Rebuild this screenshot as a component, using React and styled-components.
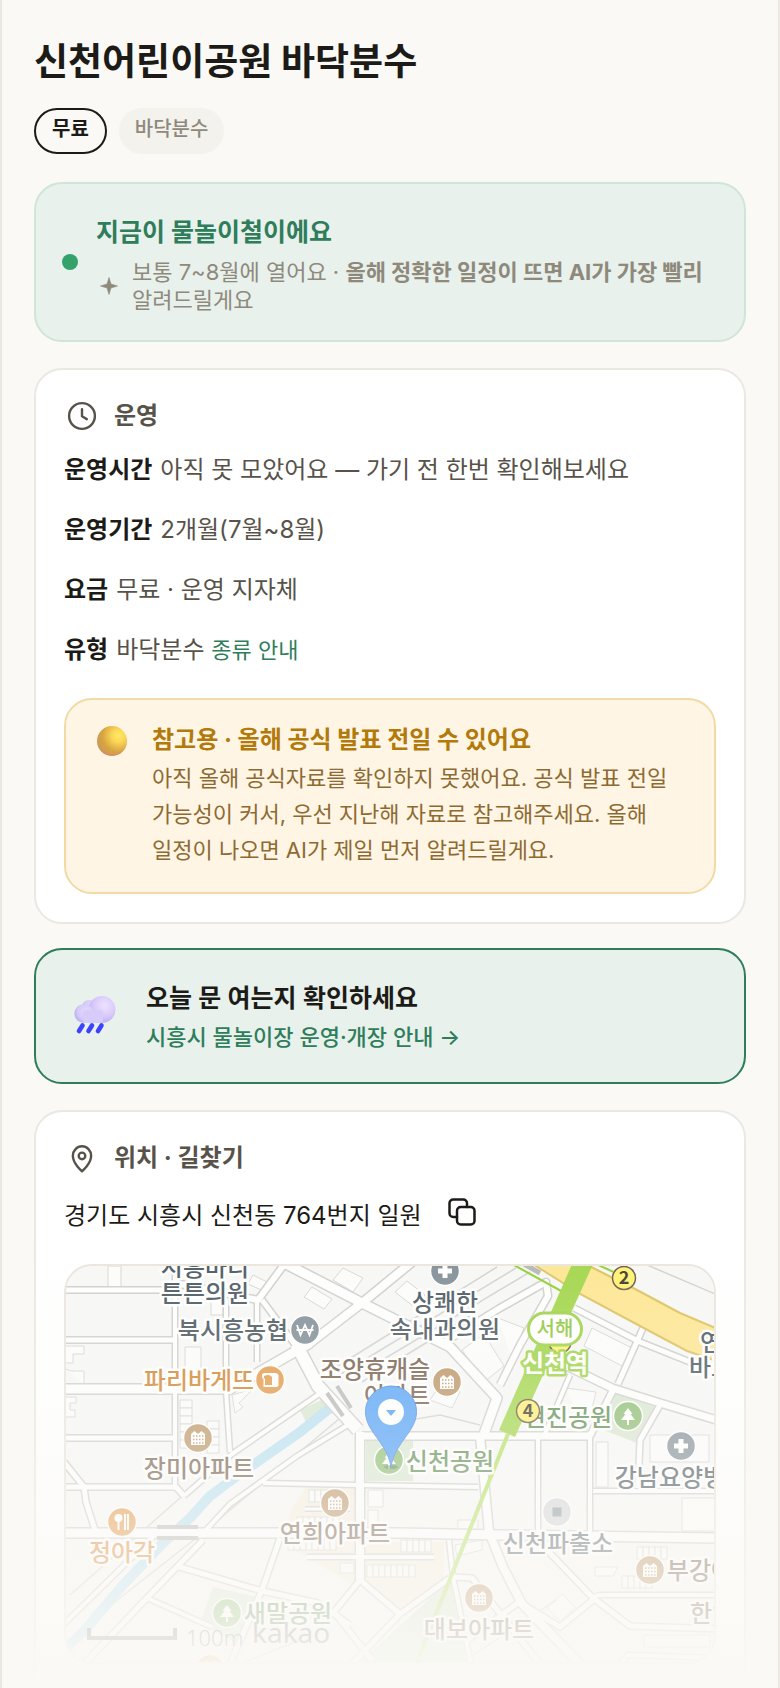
import React from 'react';
import styled, { createGlobalStyle } from 'styled-components';

const GlobalStyle = createGlobalStyle`
  * {
    box-sizing: border-box;
  }

  body {
    margin: 0;
    background: #faf9f5;
    color: #1c1b17;
    font-family: Inter, 'Noto Sans CJK KR', sans-serif;
    font-size: 24px;
    line-height: 40px;
    word-break: keep-all;
  }
`;

const Page = styled.main`
  position: relative;
  max-height: 100vh;
  overflow: hidden;
  padding: 38px 32px 0;
  border: solid #e9e7e0;
  border-width: 0 2px;
  background: #faf9f5;
`;

const Title = styled.h1`
  margin: 0 0 22px;
  font-size: 37px;
  line-height: 48px;
  font-weight: 700;
`;

const Chips = styled.div`
  display: flex;
  gap: 12px;
  margin-bottom: 28px;
`;

const Chip = styled.span`
  padding: ${props => (props.$active ? '6px 16px 10px' : '8px 16px 12px')};
  border: ${props => (props.$active ? '2px solid #1c1b17' : 'none')};
  border-radius: 23px;
  background: ${props => (props.$active ? 'transparent' : '#f3f2ed')};
  color: ${props => (props.$active ? '#1c1b17' : '#8f897c')};
  font-size: 20px;
  line-height: 26px;
  font-weight: ${props => (props.$active ? 700 : 500)};
`;

const Banner = styled.section`
  display: flex;
  align-items: center;
  gap: 18px;
  margin-bottom: 26px;
  padding: 26px;
  border: 2px solid #cfe5d9;
  border-radius: 28px;
  background: #e8f1ec;
`;

const Dot = styled.span`
  flex: none;
  width: 16px;
  height: 16px;
  border-radius: 50%;
  background: #36a26b;
`;

const BannerTitle = styled.h2`
  margin: 0 0 4px;
  color: #2f7d5b;
  font-size: 25px;
  line-height: 44px;
  font-weight: 700;
`;

const BannerNote = styled.div`
  display: flex;
  align-items: center;
  gap: 10px;
  color: #8f897c;
  font-size: 22px;
  line-height: 28px;

  svg {
    flex: none;
  }

  p {
    margin: 0;
  }
`;

const Card = styled.section`
  margin-bottom: ${props => (props.$last ? '0' : '24px')};
  padding: 28px 28px ${props => (props.$last ? '60px' : '28px')};
  border: 2px solid #eae8e2;
  border-radius: 28px;
  background: #ffffff;
`;

const CardHeader = styled.h2`
  display: flex;
  align-items: center;
  gap: 14px;
  margin: 0 0 16px;
  color: #57534a;
  font-size: 24px;
  line-height: 36px;
  font-weight: 700;
`;

const Facts = styled.dl`
  display: flex;
  flex-direction: column;
  gap: 20px;
  margin: 0;
`;

const Fact = styled.div`
  display: flex;
  align-items: baseline;
  gap: 8px;

  dt {
    font-weight: 700;
  }

  dd {
    margin: 0;
    color: #57534a;
  }
`;

const TypeLink = styled.a`
  color: #2f7d5b;
  font-size: 22px;
  text-decoration: none;
`;

const Notice = styled.div`
  display: flex;
  align-items: flex-start;
  gap: 24px;
  margin-top: 28px;
  padding: 24px 30px;
  border: 2px solid #f0dba6;
  border-radius: 28px;
  background: #fff5e4;

  svg {
    flex: none;
  }
`;

const NoticeTitle = styled.h3`
  margin: 0 0 4px;
  color: #b27a0a;
  font-size: 24px;
  line-height: 32px;
  font-weight: 700;
`;

const NoticeText = styled.p`
  margin: 0;
  color: #8d6a32;
  font-size: 22px;
  line-height: 36px;
`;

const CheckLink = styled.a`
  display: flex;
  align-items: center;
  gap: 24px;
  margin-bottom: 26px;
  padding: 26px 30px;
  border: 2px solid #2f7d5b;
  border-radius: 28px;
  background: #e8f1ec;
  text-decoration: none;

  svg {
    flex: none;
  }
`;

const CheckTitle = styled.span`
  display: block;
  padding-top: 2px;
  color: #1c1b17;
  font-size: 25px;
  line-height: 40px;
  font-weight: 600;
`;

const CheckSub = styled.span`
  display: block;
  color: #2f7d5b;
  font-size: 22px;
  line-height: 38px;
  font-weight: 500;
`;

const Address = styled.div`
  display: flex;
  align-items: flex-start;
  gap: 20px;
  margin-bottom: 24px;
  line-height: 48px;
`;

const CopyButton = styled.button`
  display: flex;
  align-items: center;
  justify-content: center;
  width: 40px;
  height: 40px;
  padding: 0;
  border: none;
  background: none;
  color: #1c1b17;
  cursor: pointer;
`;

const MapFrame = styled.div`
  height: 400px;
  overflow: hidden;
  border: 2px solid #eae6dc;
  border-radius: 28px;
  background: #f7f7f6;

  svg {
    display: block;
    width: 100%;
    height: 100%;
  }
`;

const MapText = styled.text`
  fill: ${props => props.$color};
  stroke: #ffffff;
  stroke-width: 5px;
  stroke-linejoin: round;
  paint-order: stroke;
  font-family: 'Noto Sans CJK KR', sans-serif;
  font-size: 24px;
  font-weight: 500;
`;

const StationText = styled(MapText)`
  fill: #ffffff;
  stroke: #9fd34a;
  font-weight: 700;
`;

const LineText = styled(MapText)`
  stroke: none;
  font-size: 20px;
`;

const ExitText = styled(LineText)`
  font-size: 18px;
  font-weight: 700;
`;

const ScaleText = styled.text`
  fill: #7a7a78;
  font-family: 'Noto Sans', sans-serif;
  font-size: 22px;
  font-weight: 300;
`;

const KakaoText = styled(ScaleText)`
  font-size: 28px;
  font-weight: 400;
`;

const Fade = styled.div`
  position: absolute;
  left: -2px;
  right: -2px;
  bottom: 0;
  height: 458px;
  pointer-events: none;
  background: linear-gradient(
    to bottom,
    rgba(250, 249, 245, 0) 0%,
    rgba(250, 249, 245, 0.16) 25%,
    rgba(250, 249, 245, 0.42) 54%,
    rgba(250, 249, 245, 0.6) 68%,
    rgba(250, 249, 245, 0.82) 87%,
    rgba(250, 249, 245, 0.94) 95%,
    #faf9f5 100%
  );
`;

const SparkIcon = () => (
  <svg width="26" height="26" viewBox="0 0 26 26" aria-hidden="true">
    <path d="M13 4.500l2 6.500 6.500 2-6.500 2-2 6.500-2-6.500-6.500-2 6.500-2z" fill="#8f897c" stroke="#8f897c" strokeWidth="0.6" />
  </svg>
);

const ClockIcon = () => (
  <svg width="36" height="36" viewBox="0 0 24 24" fill="none" stroke="currentColor" strokeWidth="1.6" strokeLinecap="round" strokeLinejoin="round" aria-hidden="true">
    <circle cx="12" cy="12" r="8.6" />
    <path d="M12 7.400v4.800l3.200 1.900" />
  </svg>
);

const PinIcon = () => (
  <svg width="36" height="36" viewBox="0 0 24 24" fill="none" stroke="currentColor" strokeWidth="1.6" strokeLinecap="round" strokeLinejoin="round" aria-hidden="true">
    <path d="M12 20.800s-6.100-5-6.100-10.300a6.100 6.300 0 0 1 12.200 0c0 5.300-6.100 10.300-6.100 10.300z" />
    <circle cx="12" cy="10.600" r="2.200" />
  </svg>
);

const CopyIcon = () => (
  <svg width="30" height="30" viewBox="0 0 24 24" fill="none" stroke="currentColor" strokeWidth="2" strokeLinecap="round" strokeLinejoin="round" aria-hidden="true">
    <rect x="8" y="8" width="14" height="14" rx="3" />
    <path d="M8 16H5a3 3 0 0 1-3-3V5a3 3 0 0 1 3-3h8a3 3 0 0 1 3 3v3" />
  </svg>
);

const BallIcon = () => (
  <svg width="32" height="32" viewBox="0 0 32 32" aria-hidden="true">
    <defs>
      <radialGradient id="ball" cx="0.72" cy="0.32" r="0.72">
        <stop offset="0" stopColor="#ffea62" />
        <stop offset="0.3" stopColor="#fbd757" />
        <stop offset="0.75" stopColor="#d7a441" />
        <stop offset="1" stopColor="#cf9a55" />
      </radialGradient>
      <radialGradient id="ballEdge" cx="0.5" cy="0.42" r="0.6">
        <stop offset="0.85" stopColor="#d0707a" stopOpacity="0" />
        <stop offset="1" stopColor="#d0707a" stopOpacity="0.8" />
      </radialGradient>
    </defs>
    <circle cx="16" cy="17" r="15" fill="url(#ball)" />
    <circle cx="16" cy="17" r="15" fill="url(#ballEdge)" />
  </svg>
);

const RainIcon = () => (
  <svg width="56" height="56" viewBox="0 0 56 56" aria-hidden="true">
    <defs>
      <radialGradient id="puffBig" cx="0.6" cy="0.35" r="0.65">
        <stop offset="0" stopColor="#ece2ff" />
        <stop offset="0.6" stopColor="#d9cbfa" />
        <stop offset="1" stopColor="#bfb0f3" />
      </radialGradient>
      <radialGradient id="puffSmall" cx="0.6" cy="0.4" r="0.6">
        <stop offset="0" stopColor="#e4dafc" />
        <stop offset="0.7" stopColor="#d5caf9" />
        <stop offset="1" stopColor="#bdb2f4" />
      </radialGradient>
    </defs>
    <circle cx="23" cy="19" r="7" fill="url(#puffSmall)" />
    <circle cx="36" cy="21.500" r="13.500" fill="url(#puffBig)" />
    <circle cx="18" cy="25.500" r="9.600" fill="url(#puffSmall)" />
    <rect x="17" y="22" width="20" height="13" rx="3" fill="#d7cbfa" />
    <path d="M16.500 37.500l-3.500 5.500M26 37.500l-3.500 5.500M35.500 37.500l-3.500 5.500" stroke="#3c42ff" strokeWidth="4.600" strokeLinecap="round" />
  </svg>
);

// width is the white carriageway, the grey kerb is drawn outside it
const roads = [
  { w: 5, d: 'M60 1290H174' },
  { w: 5, d: 'M60 1340L175 1340' },
  { w: 9, d: 'M60 1389H230L310 1343' },
  { w: 5, d: 'M60 1438H175' },
  { w: 5, d: 'M60 1487H176L184 1496' },
  { w: 4, d: 'M175 1260V1487' },
  { w: 4, d: 'M226 1300V1391L230 1452' },
  { w: 4, d: 'M257 1300V1362' },
  { w: 6, d: 'M175 1283L258 1300L286 1262' },
  { w: 5, d: 'M262 1300L296 1346' },
  { w: 5, d: 'M64 1462L84 1487L86 1502L95 1530' },
  { w: 9, d: 'M60 1533H400L500 1535L720 1538' },
  { w: 9, d: 'M286 1264L362 1303L450 1347L497 1398L484 1434' },
  { w: 8, d: 'M412 1262L362 1303L310 1343L298 1350' },
  { w: 12, d: 'M296 1344L318 1386L358 1430' },
  { w: 7, d: 'M362 1436H590' },
  { w: 8, d: 'M360 1432V1580' },
  { w: 4, d: 'M263 1483L358 1485L478 1487' },
  { w: 4, d: 'M593 1491H720' },
  { w: 4, d: 'M206 1530L230 1504L297 1456L356 1420' },
  { w: 4, d: 'M184 1496L232 1454L322 1392' },
  { w: 4, d: 'M160 1530L60 1628' },
  { w: 5, d: 'M203 1540L147 1598L84 1664' },
  { w: 5, d: 'M176 1566L262 1591L318 1603L350 1625' },
  { w: 5, d: 'M280 1538L262 1590L230 1664' },
  { w: 4, d: 'M147 1598L212 1627' },
  { w: 4, d: 'M307 1557H434' },
  { w: 3, d: 'M305 1509H350' },
  { w: 5, d: 'M360 1580L334 1612L372 1660' },
  { w: 5, d: 'M360 1580L400 1614L352 1664' },
  { w: 5, d: 'M400 1614L450 1578' },
  { w: 4, d: 'M449 1540L453 1577L471 1664' },
  { w: 5, d: 'M453 1577L472 1578L540 1664' },
  { w: 8, d: 'M480 1436L489 1532L503 1567L522 1604L580 1664' },
  { w: 4, d: 'M538 1436V1532' },
  { w: 4, d: 'M590 1436V1532' },
  { w: 5, d: 'M545 1548L593 1598L630 1626L720 1629' },
  { w: 4, d: 'M593 1597L600 1595H720' },
  { w: 5, d: 'M593 1600L560 1627L519 1602L465 1642' },
  { w: 4, d: 'M620 1664L628 1655L720 1658' },
  { w: 5, d: 'M574 1308L640 1342L720 1374' },
  { w: 5, d: 'M643 1328L618 1384' },
  { w: 7, d: 'M550 1358L612 1388L660 1403L720 1421' },
  { w: 6, d: 'M613 1390L590 1436' },
  { w: 4, d: 'M570 1375L545 1434' },
  { w: 5, d: 'M660 1405L640 1440L638 1488' },
  { w: 6, d: 'M440 1345L500 1308L546 1282L548 1296L520 1345L500 1385' },
];

const kerbs = [
  'M333 1369L497 1267', 'M341 1374L516 1268', 'M352 1378L530 1272', 'M362 1382L470 1316',
  'M100 1607L230 1480L310 1420', 'M70 1595L180 1498', 'M92 1620L200 1535L345 1414',
  'M640 1262L720 1296', 'M380 1425L440 1415L480 1425',
  'M556 1600L460 1664', 'M240 1664L300 1640',
];

const buildings = [
  'M108 1266h13v21h-13z', 'M66 1346h18v8h-11v9h-7', 'M66 1369l5 2h13v13', 'M66 1397h10v6h-6v7h5v7h-9',
  'M185 1347h16v27h-16z', 'M211 1295h12v20h-12z', 'M253 1275l18 9l-5 8l-18-8z',
  'M232 1395l21-6l-14 14l4 4l-8 6z', 'M343 1268l20 10l-10 14l-20-12z', 'M312 1287l20 12l-8 10l-20-12z',
  'M395 1292l12-11l18 14l-12 11z', 'M462 1350l22-16l20 32l-20 16z', 'M498 1318l26 10l-12 32',
  'M592 1328l40 20l-10 18l-38-20z', 'M566 1388l30 4l-10 42', 'M650 1435h59v27h-59z',
  'M596 1442h12v45h-12z', 'M682 1498h34v33h-34z', 'M368 1490h15v17h-15z', 'M368 1510h10v18h-10z',
  'M340 1563h14v10h-14z', 'M455 1545l27-5v10l-25 6z', 'M595 1567h23l-5 9h-18z', 'M547 1608l15-14l13 13l-14 14z',
  'M644 1635h66v12h-66z', 'M458 1520h20v12h-20z', 'M430 1400l12-18l18 10l-8 16z',
];

const terraces = [
  { x: 180, y: 1400, n: 6, v: true }, { x: 207, y: 1421, n: 4, v: true },
  { x: 309, y: 1490, n: 5 }, { x: 297, y: 1517, n: 7 }, { x: 288, y: 1538, n: 8 },
  { x: 367, y: 1565, n: 8 }, { x: 401, y: 1540, n: 5 }, { x: 637, y: 1547, n: 5 }, { x: 622, y: 1576, n: 5 },
];

const labels = [
  { x: 205, y: 1276, text: '시흥마디', color: '#4d5a63' },
  { x: 205, y: 1302, text: '튼튼의원', color: '#4d5a63' },
  { x: 233, y: 1339, text: '북시흥농협', color: '#4d5a63' },
  { x: 445, y: 1311, text: '상쾌한', color: '#4d5a63' },
  { x: 445, y: 1338, text: '속내과의원', color: '#4d5a63' },
  { x: 199, y: 1389, text: '파리바게뜨', color: '#cf8532' },
  { x: 375, y: 1378, text: '조양휴캐슬', color: '#76604f' },
  { x: 397, y: 1404, text: '아파트', color: '#76604f' },
  { x: 199, y: 1477, text: '장미아파트', color: '#76604f' },
  { x: 450, y: 1470, text: '신천공원', color: '#5f8d55' },
  { x: 568, y: 1426, text: '현진공원', color: '#5f8d55' },
  { x: 335, y: 1542, text: '연희아파트', color: '#76604f' },
  { x: 122, y: 1561, text: '정아각', color: '#d98a3c' },
  { x: 288, y: 1622, text: '새말공원', color: '#5f8d55' },
  { x: 558, y: 1552, text: '신천파출소', color: '#5a666e' },
  { x: 479, y: 1638, text: '대보아파트', color: '#76604f' },
  { x: 681, y: 1486, text: '강남요양병원', color: '#4d5a63' },
  { x: 722, y: 1351, text: '연세', color: '#4d5a63' },
  { x: 711, y: 1376, text: '바로', color: '#4d5a63' },
  { x: 711, y: 1579, text: '부강아파', color: '#76604f' },
  { x: 712, y: 1622, text: '한일', color: '#76604f' },
];

const places = [
  { x: 445, y: 1271, kind: 'cross' },
  { x: 681, y: 1446, kind: 'cross' },
  { x: 305, y: 1330, kind: 'bank' },
  { x: 270, y: 1380, kind: 'bakery' },
  { x: 122, y: 1522, kind: 'food' },
  { x: 198, y: 1438, kind: 'apartment' },
  { x: 447, y: 1382, kind: 'apartment' },
  { x: 335, y: 1503, kind: 'apartment' },
  { x: 479, y: 1598, kind: 'apartment' },
  { x: 650, y: 1570, kind: 'apartment' },
  { x: 628, y: 1416, kind: 'tree' },
  { x: 389, y: 1460, kind: 'tree' },
  { x: 227, y: 1613, kind: 'tree' },
  { x: 557, y: 1512, kind: 'police' },
  { x: 210, y: 1669, kind: 'food' },
];

const placeColors = {
  cross: '#84919a',
  bank: '#84919a',
  bakery: '#e39a4c',
  food: '#e39a4c',
  apartment: '#bd9668',
  tree: '#8dbd73',
  police: '#d3d6d7',
};

const placeGlyphs = {
  cross: <path d="M-2.500 -7h5v4.500h4.500v5h-4.500V7h-5V2.500h-4.500v-5h4.500z" fill="#fff" />,
  bank: <path d="M-8 -5l3.500 10L0 -5l4.500 10L8 -5M-8.500 0h17" fill="none" stroke="#fff" strokeWidth="1.8" />,
  bakery: (
    <>
      <path d="M-8 -5q0-2 3-2H5q4 0 3.500 4V5q0 2-2 2h-13v-8q-2-1-1.500-4z" fill="#fff" />
      <path d="M-6 -4q4-2 7 0q2 1 1 3v6h-7v-6q-2-1-1-3z" fill="#e39a4c" />
    </>
  ),
  food: (
    <>
      <circle cx="-3.500" cy="-4" r="4" fill="#fff" />
      <path d="M-3.500 -2V8M3 -8V8M6 -8V8" stroke="#fff" strokeWidth="2" />
    </>
  ),
  apartment: (
    <>
      <path d="M-7 7v-11l3.500-3L0 -4l3.500-3L7 -4V7z" fill="#fff" />
      <path d="M-5 -2H6M-5 1.500H6M-5 5H6" stroke="#bd9668" strokeWidth="1.500" strokeDasharray="1.500 1.500" />
    </>
  ),
  tree: <path d="M0 -8l4.500 6h-2l4.500 6h-6v5h-2v-5h-6l4.500-6h-2z" fill="#fff" />,
  police: <rect x="-4.500" y="-4.500" width="9" height="9" fill="#8b989e" />,
};

const Terrace = ({ x, y, n, v }) => (
  <g transform={`translate(${x} ${y})`}>
    {Array.from({ length: n }, (_, i) => (
      <rect key={i} x={v ? 0 : i * 6} y={v ? i * 8 : 0} width={v ? 12 : 6} height={v ? 8 : 12} />
    ))}
  </g>
);

const ExitBadge = ({ x, y, children }) => (
  <g>
    <circle cx={x} cy={y} r="11.500" fill="#fdf172" stroke="#6d5b45" strokeWidth="1.500" />
    <ExitText x={x} y={y + 6} textAnchor="middle" $color="#43382b">
      {children}
    </ExitText>
  </g>
);

const ParkMap = () => (
  <svg viewBox="66 1266 648 396" preserveAspectRatio="xMidYMid slice" role="img" aria-label="신천어린이공원 지도">
    <defs>
      <linearGradient id="marker" x1="0" y1="0" x2="0" y2="1">
        <stop offset="0" stopColor="#58a5f7" />
        <stop offset="1" stopColor="#4f9df8" />
      </linearGradient>
    </defs>
    <rect x="0" y="1200" width="900" height="520" fill="#f7f7f6" />

    <g fill="#f7efe0">
      <path d="M307 1486H357V1587L280 1542L292 1508z" />
      <path d="M364 1542H444V1578L400 1612L364 1580z" />
    </g>
    <g fill="#d9e7d1">
      <path d="M366 1438h47v43h-47z" />
      <path d="M615 1393l40 14l-18 36l-34-13z" />
      <path d="M213 1587l44 10l-20 46l-37-20z" />
      <path d="M450 1580L358 1664H467z" />
      <path d="M300 1410l30-14l12 14l-36 12z" />
    </g>

    <g fill="#fcfcfb" stroke="#d6d6d4" strokeWidth="1">
      {buildings.map(d => <path key={d} d={d} />)}
      {terraces.map(t => <Terrace key={`${t.x}-${t.y}`} {...t} />)}
    </g>

    <g fill="none" stroke="#d2d2d0" strokeWidth="1.500">
      {kerbs.map(d => <path key={d} d={d} />)}
    </g>
    <path d="M60 1654L85 1630L123 1585L163 1543L190 1518L210 1496L237 1476L260 1460L300 1432L330 1408" fill="none" stroke="#b9e0f0" strokeWidth="10" />
    <g fill="none" stroke="#cfcfcd" strokeLinejoin="round">
      {roads.map(r => <path key={r.d} d={r.d} strokeWidth={r.w + 3} />)}
    </g>
    <g fill="none" stroke="#fefefe" strokeLinejoin="round">
      {roads.map(r => <path key={r.d} d={r.d} strokeWidth={r.w} />)}
    </g>
    <path d="M157 1527h41M157 1538h41M327 1393l16 23M337 1386l14 22" stroke="#b9b9b7" strokeWidth="4" fill="none" />

    <path d="M533 1262H585L637 1290L680 1313L720 1330V1362L687 1351L640 1326L582 1295z" fill="#fde693" />
    <path d="M585 1264L637 1290L680 1313L720 1330M533 1264L582 1295L640 1326L687 1351L720 1362" fill="none" stroke="#dcc25f" strokeWidth="2" />
    <path d="M512 1264L563 1292M596 1264L618 1274" stroke="#8fd02e" strokeWidth="2" />
    <path d="M524 1264l16 9" stroke="#b7b7b5" strokeWidth="5" />
    <path d="M573 1262H594L515 1437L499 1430z" fill="#a3d64c" />
    <path d="M508 1434L416 1664" stroke="#b5e063" strokeWidth="4" />

    <circle cx="560" cy="1342" r="11" fill="#fdf172" stroke="#6d5b45" strokeWidth="1.500" />
    <rect x="528.500" y="1313" width="53" height="32" rx="16" fill="#fff" stroke="#9fd34a" strokeWidth="3" />
    <LineText x="555" y="1336" textAnchor="middle" $color="#8fc73e">서해</LineText>
    <StationText x="555" y="1372" textAnchor="middle">신천역</StationText>

    {labels.map(l => (
      <MapText key={l.text} x={l.x} y={l.y} textAnchor="middle" $color={l.color}>
        {l.text}
      </MapText>
    ))}
    {places.map(p => (
      <g key={`${p.x}-${p.y}`} transform={`translate(${p.x} ${p.y})`}>
        <circle r="14.500" fill={placeColors[p.kind]} stroke="#fff" strokeWidth="1.500" />
        {placeGlyphs[p.kind]}
      </g>
    ))}
    <ExitBadge x={624} y={1278}>2</ExitBadge>
    <ExitBadge x={528} y={1411}>4</ExitBadge>

    <ellipse cx="391" cy="1467" rx="7" ry="2" fill="#50606a" opacity="0.5" />
    <path d="M391 1467C387 1442 365.500 1432 365.500 1411.500a25.500 25.500 0 0 1 51 0C416.500 1432 395 1442 391 1467z" fill="url(#marker)" stroke="#4a8be0" strokeWidth="1" />
    <circle cx="391" cy="1412" r="13" fill="#fff" />
    <path d="M386 1410h10l-5 6z" fill="#4f9df5" />

    <path d="M89 1628v10h86v-10" fill="none" stroke="#777775" strokeWidth="4" />
    <ScaleText x="186" y="1646">100m</ScaleText>
    <KakaoText x="252" y="1643">kakao</KakaoText>
  </svg>
);

const App = () => (
  <>
    <GlobalStyle />
    <Page>
      <Title>신천어린이공원 바닥분수</Title>
      <Chips>
        <Chip $active>무료</Chip>
        <Chip>바닥분수</Chip>
      </Chips>

      <Banner>
        <Dot />
        <div>
          <BannerTitle>지금이 물놀이철이에요</BannerTitle>
          <BannerNote>
            <SparkIcon />
            <p>
              보통 7~8월에 열어요 · <b>올해 정확한 일정이 뜨면 AI가 가장 빨리</b> 알려드릴게요
            </p>
          </BannerNote>
        </div>
      </Banner>

      <Card>
        <CardHeader>
          <ClockIcon />
          운영
        </CardHeader>
        <Facts>
          <Fact>
            <dt>운영시간</dt>
            <dd>아직 못 모았어요 — 가기 전 한번 확인해보세요</dd>
          </Fact>
          <Fact>
            <dt>운영기간</dt>
            <dd>2개월(7월~8월)</dd>
          </Fact>
          <Fact>
            <dt>요금</dt>
            <dd>무료 · 운영 지자체</dd>
          </Fact>
          <Fact>
            <dt>유형</dt>
            <dd>
              바닥분수 <TypeLink href="#types">종류 안내</TypeLink>
            </dd>
          </Fact>
        </Facts>
        <Notice>
          <BallIcon />
          <div>
            <NoticeTitle>참고용 · 올해 공식 발표 전일 수 있어요</NoticeTitle>
            <NoticeText>
              아직 올해 공식자료를 확인하지 못했어요. 공식 발표 전일 가능성이 커서, 우선 지난해 자료로
              참고해주세요. 올해 일정이 나오면 AI가 제일 먼저 알려드릴게요.
            </NoticeText>
          </div>
        </Notice>
      </Card>

      <CheckLink href="#notice">
        <RainIcon />
        <span>
          <CheckTitle>오늘 문 여는지 확인하세요</CheckTitle>
          <CheckSub>시흥시 물놀이장 운영·개장 안내 →</CheckSub>
        </span>
      </CheckLink>

      <Card $last>
        <CardHeader>
          <PinIcon />
          위치 · 길찾기
        </CardHeader>
        <Address>
          <span>경기도 시흥시 신천동 764번지 일원</span>
          <CopyButton type="button" aria-label="주소 복사">
            <CopyIcon />
          </CopyButton>
        </Address>
        <MapFrame>
          <ParkMap />
        </MapFrame>
      </Card>
      <Fade />
    </Page>
  </>
);

export default App;
